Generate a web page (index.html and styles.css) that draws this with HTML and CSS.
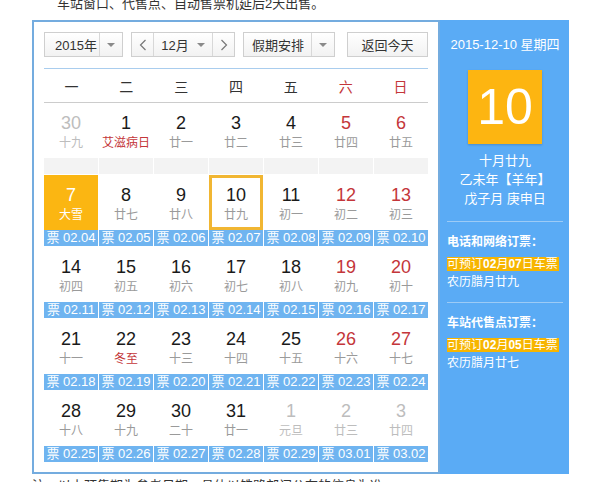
FILE: index.html
```html
<!DOCTYPE html>
<html lang="zh">
<head>
<meta charset="utf-8">
<title>火车票预售日历</title>
<link rel="stylesheet" href="styles.css">
</head>
<body>
<p class="notice">车站窗口、代售点、自动售票机延后2天出售。</p>
<div class="calendar">
  <div class="main">
    <div class="toolbar">
      <div class="select year"><span class="label">2015年</span><span class="drop"><i class="caret"></i></span></div>
      <div class="select month">
        <span class="nav"><svg width="8" height="12" viewBox="0 0 8 12"><polyline points="6.5,1 1.5,6 6.5,11" fill="none" stroke="#777" stroke-width="1.2"/></svg></span>
        <span class="mid">12月<i class="caret"></i></span>
        <span class="nav next"><svg width="8" height="12" viewBox="0 0 8 12"><polyline points="1.5,1 6.5,6 1.5,11" fill="none" stroke="#777" stroke-width="1.2"/></svg></span>
      </div>
      <div class="select holiday"><span class="label">假期安排</span><span class="drop"><i class="caret"></i></span></div>
      <div class="btn">返回今天</div>
    </div>
    <div class="weekdays">
      <span>一</span><span>二</span><span>三</span><span>四</span><span>五</span><span class="we">六</span><span class="we">日</span>
    </div>
    <div class="grid">
      <div class="day other"><div class="box"><b>30</b><em>十九</em></div><div class="tk empty"></div></div>
      <div class="day"><div class="box"><b>1</b><em class="fest">艾滋病日</em></div><div class="tk empty"></div></div>
      <div class="day"><div class="box"><b>2</b><em>廿一</em></div><div class="tk empty"></div></div>
      <div class="day"><div class="box"><b>3</b><em>廿二</em></div><div class="tk empty"></div></div>
      <div class="day"><div class="box"><b>4</b><em>廿三</em></div><div class="tk empty"></div></div>
      <div class="day we"><div class="box"><b>5</b><em>廿四</em></div><div class="tk empty"></div></div>
      <div class="day we"><div class="box"><b>6</b><em>廿五</em></div><div class="tk empty"></div></div>

      <div class="day sel"><div class="box"><b>7</b><em>大雪</em></div><div class="tk">票 02.04</div></div>
      <div class="day"><div class="box"><b>8</b><em>廿七</em></div><div class="tk">票 02.05</div></div>
      <div class="day"><div class="box"><b>9</b><em>廿八</em></div><div class="tk">票 02.06</div></div>
      <div class="day today"><div class="box"><b>10</b><em>廿九</em></div><div class="tk">票 02.07</div></div>
      <div class="day"><div class="box"><b>11</b><em>初一</em></div><div class="tk">票 02.08</div></div>
      <div class="day we"><div class="box"><b>12</b><em>初二</em></div><div class="tk">票 02.09</div></div>
      <div class="day we"><div class="box"><b>13</b><em>初三</em></div><div class="tk">票 02.10</div></div>

      <div class="day"><div class="box"><b>14</b><em>初四</em></div><div class="tk">票 02.11</div></div>
      <div class="day"><div class="box"><b>15</b><em>初五</em></div><div class="tk">票 02.12</div></div>
      <div class="day"><div class="box"><b>16</b><em>初六</em></div><div class="tk">票 02.13</div></div>
      <div class="day"><div class="box"><b>17</b><em>初七</em></div><div class="tk">票 02.14</div></div>
      <div class="day"><div class="box"><b>18</b><em>初八</em></div><div class="tk">票 02.15</div></div>
      <div class="day we"><div class="box"><b>19</b><em>初九</em></div><div class="tk">票 02.16</div></div>
      <div class="day we"><div class="box"><b>20</b><em>初十</em></div><div class="tk">票 02.17</div></div>

      <div class="day"><div class="box"><b>21</b><em>十一</em></div><div class="tk">票 02.18</div></div>
      <div class="day"><div class="box"><b>22</b><em class="fest">冬至</em></div><div class="tk">票 02.19</div></div>
      <div class="day"><div class="box"><b>23</b><em>十三</em></div><div class="tk">票 02.20</div></div>
      <div class="day"><div class="box"><b>24</b><em>十四</em></div><div class="tk">票 02.21</div></div>
      <div class="day"><div class="box"><b>25</b><em>十五</em></div><div class="tk">票 02.22</div></div>
      <div class="day we"><div class="box"><b>26</b><em>十六</em></div><div class="tk">票 02.23</div></div>
      <div class="day we"><div class="box"><b>27</b><em>十七</em></div><div class="tk">票 02.24</div></div>

      <div class="day"><div class="box"><b>28</b><em>十八</em></div><div class="tk">票 02.25</div></div>
      <div class="day"><div class="box"><b>29</b><em>十九</em></div><div class="tk">票 02.26</div></div>
      <div class="day"><div class="box"><b>30</b><em>二十</em></div><div class="tk">票 02.27</div></div>
      <div class="day"><div class="box"><b>31</b><em>廿一</em></div><div class="tk">票 02.28</div></div>
      <div class="day other"><div class="box"><b>1</b><em>元旦</em></div><div class="tk">票 02.29</div></div>
      <div class="day other"><div class="box"><b>2</b><em>廿三</em></div><div class="tk">票 03.01</div></div>
      <div class="day other"><div class="box"><b>3</b><em>廿四</em></div><div class="tk">票 03.02</div></div>
    </div>
  </div>
  <aside class="side">
    <div class="cur-date">2015-12-10 星期四</div>
    <div class="big-day">10</div>
    <div class="lunar">
      <div>十月廿九</div>
      <div>乙未年【羊年】</div>
      <div>戊子月 庚申日</div>
    </div>
    <div class="book">
      <div class="book-title">电话和网络订票：</div>
      <div class="book-line"><span class="hl">可预订<strong>02</strong>月<strong>07</strong>日车票</span></div>
      <div class="book-lunar">农历腊月廿九</div>
    </div>
    <div class="book">
      <div class="book-title">车站代售点订票：</div>
      <div class="book-line"><span class="hl">可预订<strong>02</strong>月<strong>05</strong>日车票</span></div>
      <div class="book-lunar">农历腊月廿七</div>
    </div>
  </aside>
</div>
<p class="footnote">注：以上预售期为参考日期，具体以铁路部门公布的信息为准。</p>
</body>
</html>
```

FILE: styles.css
```css
html, body {
  margin: 0;
  padding: 0;
}
body {
  width: 594px;
  height: 482px;
  overflow: hidden;
  background: #fff;
  color: #333;
  font-family: "Liberation Sans", Arial, "Noto Sans CJK SC", sans-serif;
}
.notice {
  margin: -4px 0 0 57px;
  font-size: 13px;
  line-height: 16px;
  color: #333;
}
.calendar {
  display: flex;
  margin: 8px 0 0 32px;
}
.main {
  width: 408px;
  box-sizing: border-box;
  border: 2px solid #74acdf;
  padding: 10px 10px 10px 10px;
}
.toolbar {
  display: flex;
  height: 25px;
  font-size: 13px;
  color: #333;
}
.select, .btn {
  box-sizing: border-box;
  height: 25px;
  border: 1px solid #cfcfcf;
  background: linear-gradient(#ffffff, #f2f2f2);
  display: flex;
  align-items: stretch;
}
.year { width: 79px; }
.month { width: 104px; margin-left: 8px; }
.holiday { width: 92px; margin-left: 8px; }
.btn {
  width: 81px;
  margin-left: 12px;
  justify-content: center;
  align-items: center;
  font-size: 13px;
}
.label {
  flex: 1;
  display: flex;
  align-items: center;
  padding-left: 10px;
}
.holiday .label { padding-left: 8px; }
.drop {
  width: 22px;
  border-left: 1px solid #d8d8d8;
  display: flex;
  align-items: center;
  justify-content: center;
}
.caret {
  display: inline-block;
  width: 0;
  height: 0;
  border-left: 4px solid transparent;
  border-right: 4px solid transparent;
  border-top: 4px solid #8a8a8a;
}
.nav {
  width: 21px;
  border-right: 1px solid #d8d8d8;
  display: flex;
  align-items: center;
  justify-content: center;
}
.nav.next {
  border-right: 0;
  border-left: 1px solid #d8d8d8;
}
.mid {
  flex: 1;
  display: flex;
  align-items: center;
  justify-content: center;
  gap: 8px;
}
.weekdays {
  margin-top: 11px;
  border-top: 1px solid #a9cdee;
  border-bottom: 1px solid #cccccc;
  height: 33px;
  display: grid;
  grid-template-columns: repeat(7, 1fr);
  align-items: center;
  text-align: center;
  font-size: 14px;
  color: #333;
}
.weekdays .we { color: #c4363a; }
.grid {
  display: grid;
  grid-template-columns: repeat(7, 1fr);
  column-gap: 1px;
  row-gap: 1px;
}
.day {
  display: flex;
  flex-direction: column;
}
.box {
  box-sizing: border-box;
  height: 55px;
  padding-top: 10px;
  display: flex;
  flex-direction: column;
  align-items: center;
  background: #fff;
}
.box b {
  font-weight: normal;
  font-size: 18px;
  line-height: 20px;
  color: #1a1a1a;
}
.box em {
  font-style: normal;
  font-size: 12px;
  line-height: 20px;
  color: #9a9a9a;
}
.box em.fest { color: #c4363a; }
.day.we .box b { color: #c4363a; }
.day.other .box b,
.day.other .box em { color: #bdbdbd; }
.day.sel .box { background: #fbb612; }
.day.sel .box b,
.day.sel .box em { color: #fff; }
.day.today .box {
  border: 3px solid #f1b632;
  padding-top: 7px;
}
.tk {
  height: 16px;
  line-height: 16px;
  background: #6fb4f0;
  color: #fff;
  font-size: 13px;
  text-align: center;
  white-space: nowrap;
  overflow: hidden;
}
.tk.empty { background: #f3f3f3; }
.side {
  width: 129px;
  box-sizing: border-box;
  background: #5aabf5;
  color: #fff;
  padding: 16px 6px 0 7px;
}
.cur-date {
  font-size: 13px;
  line-height: 18px;
  text-align: center;
}
.big-day {
  width: 74px;
  height: 74px;
  margin: 16px auto 0;
  background: #fdb511;
  box-shadow: 0 1px 2px rgba(0, 0, 0, 0.18);
  font-size: 50px;
  line-height: 74px;
  text-align: center;
  color: #fff;
}
.lunar {
  margin-top: 7px;
  font-size: 13px;
  line-height: 19px;
  text-align: center;
  padding-bottom: 13px;
  border-bottom: 1px solid #9ccbf6;
}
.book {
  padding-top: 10px;
  padding-bottom: 10px;
  font-size: 12px;
  border-bottom: 1px solid #9ccbf6;
}
.book:last-child { border-bottom: 0; }
.book-title {
  font-weight: bold;
  line-height: 20px;
}
.book-line {
  margin-top: 4px;
  line-height: 16px;
}
.hl {
  background: #f7b500;
  padding: 0 1px 0 0;
}
.hl strong { font-weight: bold; }
.book-lunar { line-height: 20px; }
.footnote {
  margin: 4px 0 0 32px;
  font-size: 13px;
  line-height: 16px;
  color: #333;
}
```
